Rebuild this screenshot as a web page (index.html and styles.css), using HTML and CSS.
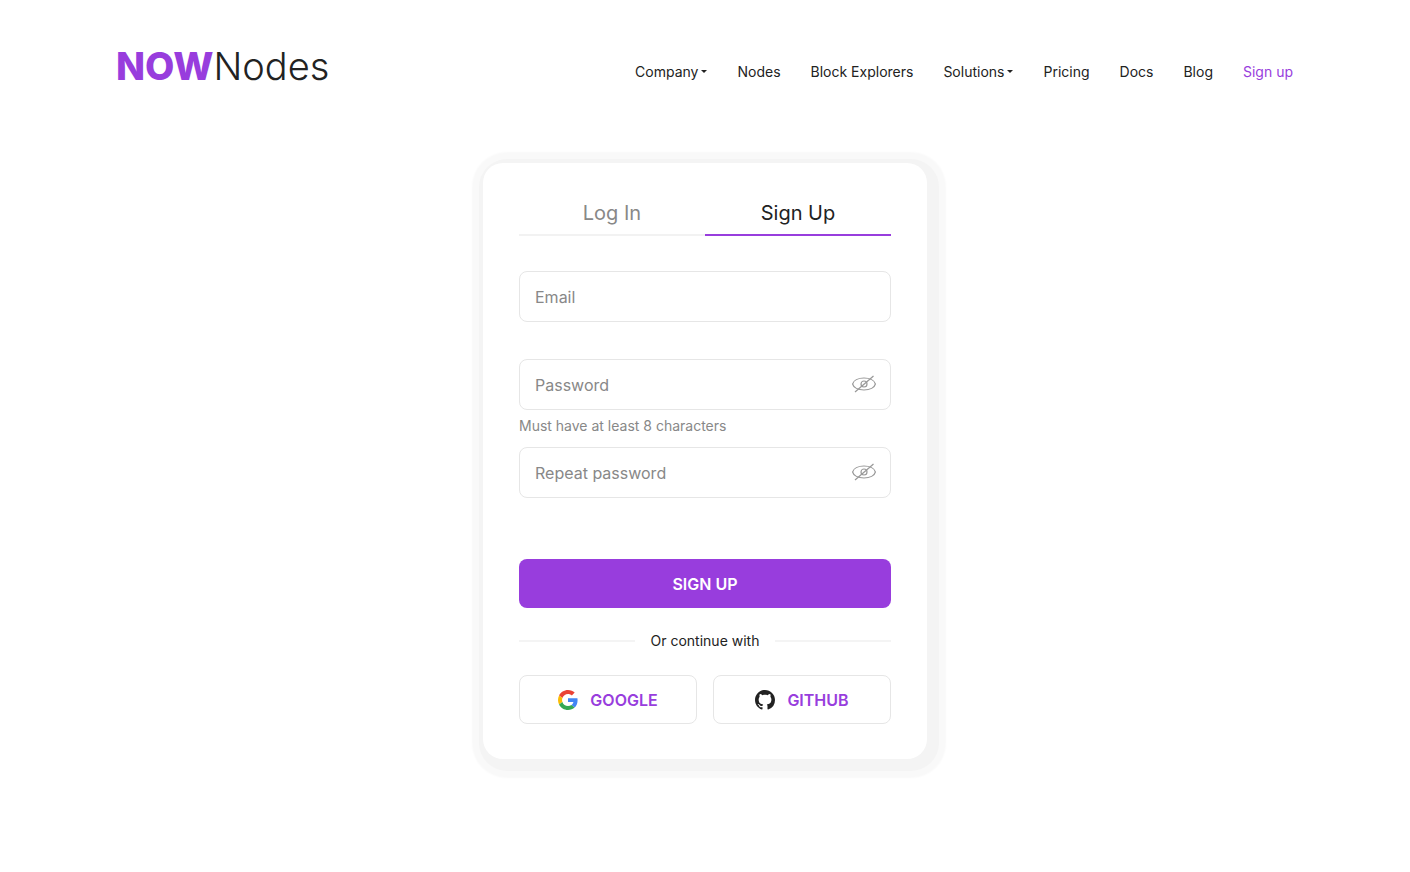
FILE: index.html
```html
<!DOCTYPE html>
<html lang="en">
<head>
<meta charset="utf-8">
<meta name="viewport" content="width=device-width, initial-scale=1">
<title>NOWNodes – Sign Up</title>
<link rel="stylesheet" href="styles.css">
</head>
<body>
<header class="header">
  <a class="logo" href="#"><span class="logo-bold">NOW</span><span>Nodes</span></a>
  <nav class="nav">
    <a class="nav-link" href="#">Company<span class="caret"></span></a>
    <a class="nav-link" href="#">Nodes</a>
    <a class="nav-link" href="#">Block Explorers</a>
    <a class="nav-link" href="#">Solutions<span class="caret"></span></a>
    <a class="nav-link" href="#">Pricing</a>
    <a class="nav-link" href="#">Docs</a>
    <a class="nav-link" href="#">Blog</a>
    <a class="nav-link nav-link-accent" href="#">Sign up</a>
  </nav>
</header>
<main class="main">
  <form class="card">
    <div class="tabs">
      <button class="tab" type="button">Log In</button>
      <button class="tab tab-active" type="button">Sign Up</button>
    </div>
    <div class="field">
      <input class="input" type="email" placeholder="Email" aria-label="Email">
    </div>
    <div class="field">
      <input class="input input-secret" type="password" placeholder="Password" aria-label="Password" aria-describedby="hint">
      <button class="eye" type="button" aria-label="Show password">
        <svg width="24" height="18" viewBox="0 0 24 18" fill="none" stroke="currentColor" stroke-width="1.200"><path d="M.6 9C1.500 5.500 6 3 12 3S22.500 5.500 23.400 9C22.500 12.500 18 15 12 15S1.500 12.500.6 9Z"/><circle cx="12" cy="9" r="3"/><path d="M3 17 21.500 1"/></svg>
      </button>
    </div>
    <p class="hint" id="hint">Must have at least 8 characters</p>
    <div class="field">
      <input class="input input-secret" type="password" placeholder="Repeat password" aria-label="Repeat password">
      <button class="eye" type="button" aria-label="Show repeated password">
        <svg width="24" height="18" viewBox="0 0 24 18" fill="none" stroke="currentColor" stroke-width="1.200"><path d="M.6 9C1.500 5.500 6 3 12 3S22.500 5.500 23.400 9C22.500 12.500 18 15 12 15S1.500 12.500.6 9Z"/><circle cx="12" cy="9" r="3"/><path d="M3 17 21.500 1"/></svg>
      </button>
    </div>
    <button class="submit" type="submit">SIGN UP</button>
    <div class="divider">Or continue with</div>
    <div class="socials">
      <button class="social" type="button">
        <svg width="20" height="20" viewBox="0 0 48 48"><path fill="#EA4335" d="M24 9.500c3.540 0 6.710 1.220 9.210 3.600l6.850-6.850C35.900 2.380 30.470 0 24 0 14.620 0 6.510 5.380 2.560 13.220l7.980 6.190C12.430 13.720 17.740 9.500 24 9.500z"/><path fill="#4285F4" d="M46.980 24.550c0-1.570-.15-3.090-.38-4.550H24v9.020h12.940c-.58 2.960-2.260 5.480-4.780 7.180l7.730 6c4.510-4.180 7.090-10.360 7.090-17.650z"/><path fill="#FBBC05" d="M10.530 28.590c-.48-1.450-.76-2.990-.76-4.590s.27-3.140.76-4.590l-7.980-6.190C.92 16.460 0 20.120 0 24s.92 7.540 2.560 10.780l7.970-6.190z"/><path fill="#34A853" d="M24 48c6.480 0 11.930-2.130 15.890-5.810l-7.730-6c-2.150 1.450-4.920 2.300-8.160 2.300-6.260 0-11.570-4.220-13.470-9.910l-7.980 6.190C6.510 42.620 14.620 48 24 48z"/></svg>
        GOOGLE
      </button>
      <button class="social" type="button">
        <svg width="20" height="20" viewBox="0 0 16 16" fill="#222"><path d="M8 0C3.580 0 0 3.580 0 8c0 3.540 2.290 6.530 5.470 7.590.4.070.55-.17.55-.38 0-.19-.01-.82-.01-1.490-2.010.37-2.530-.49-2.690-.94-.09-.23-.48-.94-.82-1.130-.28-.15-.68-.52-.01-.53.63-.01 1.080.58 1.230.82.72 1.210 1.870.87 2.330.66.07-.52.28-.87.51-1.070-1.780-.2-3.640-.89-3.640-3.950 0-.87.31-1.590.82-2.150-.08-.2-.36-1.020.08-2.120 0 0 .67-.21 2.200.82.64-.18 1.320-.27 2-.27s1.360.09 2 .27c1.530-1.040 2.200-.82 2.200-.82.44 1.100.16 1.920.08 2.120.51.56.82 1.270.82 2.150 0 3.070-1.870 3.750-3.650 3.950.29.25.54.73.54 1.480 0 1.070-.01 1.930-.01 2.200 0 .21.15.46.55.38A8.010 8.010 0 0 0 16 8c0-4.420-3.580-8-8-8z"/></svg>
        GITHUB
      </button>
    </div>
  </form>
</main>
</body>
</html>
```
FILE: styles.css
```css
* {
  box-sizing: border-box;
}

body {
  margin: 0;
  background: #fff;
  color: #222;
  font-family: Inter, "Noto Sans", sans-serif;
  font-size: 14px;
}

button,
input {
  margin: 0;
  font: inherit;
  color: inherit;
}

button {
  padding: 0;
  border: 0;
  background: none;
  cursor: pointer;
}

a {
  color: inherit;
  text-decoration: none;
}

.header {
  display: flex;
  justify-content: space-between;
  max-width: 1178px;
  margin: 0 auto;
  padding: 42px 1px 0 0;
}

.logo {
  font-size: 38px;
  font-weight: 300;
  line-height: 48px;
}

.logo-bold {
  color: #983ddd;
  font-weight: 800;
}

.nav {
  display: flex;
  gap: 30px;
  padding-top: 19px;
}

.nav-link {
  display: flex;
  align-items: center;
  height: 20px;
  white-space: nowrap;
}

.nav-link-accent {
  color: #983ddd;
}

.caret {
  margin-left: 3px;
  border: 3px solid transparent;
  border-top-color: #222;
  border-bottom: 0;
}

.main {
  display: flex;
  justify-content: center;
  padding: 73px 16px 96px;
}

.card {
  width: 100%;
  max-width: 444px;
  padding: 36px 36px 35px;
  border-radius: 20px;
  background: #fff;
  box-shadow: 4px 4px 0 8px #f4f4f4, 4px 4px 2px 15px #f9f9f9;
}

.tabs {
  display: flex;
  margin-bottom: 35px;
}

.tab {
  flex: 1;
  height: 37px;
  padding-bottom: 8px;
  border-bottom: 2px solid #f2f2f2;
  color: #888;
  font-size: 20px;
  line-height: 24px;
}

.tab-active {
  border-color: #983ddd;
  color: #222;
}

.field {
  display: flex;
  position: relative;
  margin-bottom: 37px;
}

.input {
  width: 100%;
  height: 51px;
  padding: 0 15px;
  border: 1px solid #e6e6e6;
  border-radius: 8px;
  background: #fff;
  font-size: 16px;
  outline: 0;
}

.input-secret {
  padding-right: 48px;
}

.input::placeholder {
  color: #888;
  opacity: 1;
}

.eye {
  display: flex;
  position: absolute;
  top: 16px;
  right: 15px;
  color: #999;
}

.hint {
  height: 37px;
  margin: -37px 0 0;
  padding-top: 6px;
  color: #888;
  line-height: 20px;
}

.submit {
  width: 100%;
  height: 49px;
  margin-top: 24px;
  border-radius: 8px;
  background: #983ddd;
  color: #fff;
  font-size: 16px;
  font-weight: 600;
}

.divider {
  display: flex;
  align-items: center;
  gap: 16px;
  margin: 23px 0 24px;
  line-height: 20px;
}

.divider::before,
.divider::after {
  content: "";
  flex: 1;
  height: 2px;
  background: #f4f4f4;
}

.socials {
  display: flex;
  gap: 16px;
}

.social {
  display: flex;
  flex: 1;
  align-items: center;
  justify-content: center;
  gap: 12px;
  height: 49px;
  border: 1px solid #e6e6e6;
  border-radius: 8px;
  color: #983ddd;
  font-size: 16px;
  font-weight: 600;
}
```
